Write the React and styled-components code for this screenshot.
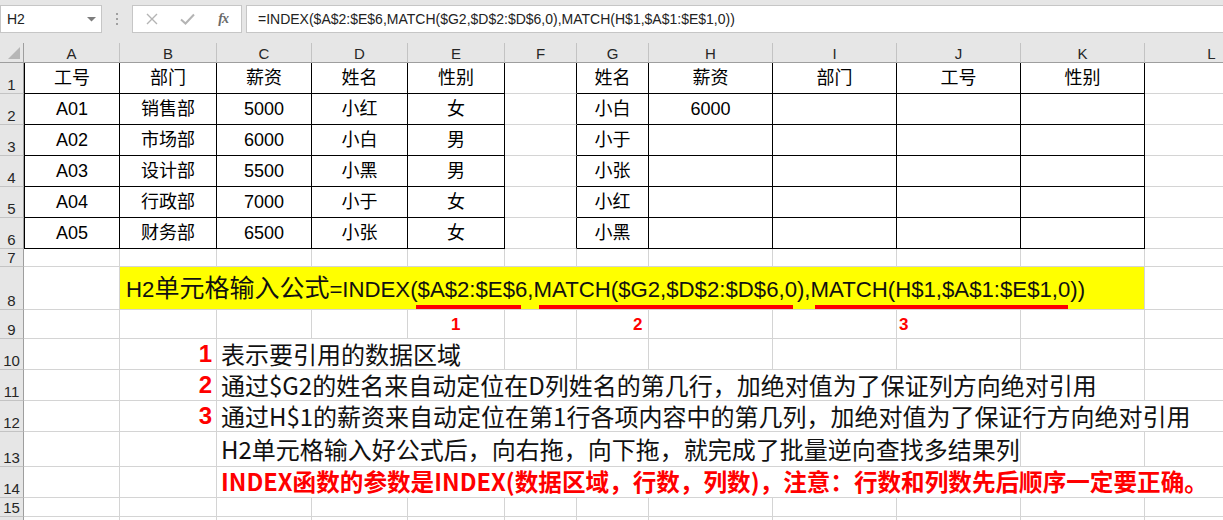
import React from 'react';
import styled, { createGlobalStyle } from 'styled-components';

const GRID = '#d4d4d4';
const HEAD_BG = '#e6e6e6';
const HEAD_SEP = '#c3c3c3';
const HEAD_EDGE = '#9e9e9e';
const BLACK = '#000';
const RED = '#ff0000';

const Global = createGlobalStyle`
  html, body { margin: 0; padding: 0; background: #fff; }
  body { font-family: "Liberation Sans", "Noto Sans CJK SC", sans-serif; overflow: hidden; }
`;

const COLS = [
  { k: 'A', w: 96 }, { k: 'B', w: 97 }, { k: 'C', w: 95 }, { k: 'D', w: 96 },
  { k: 'E', w: 97 }, { k: 'F', w: 72 }, { k: 'G', w: 72 }, { k: 'H', w: 124 },
  { k: 'I', w: 124 }, { k: 'J', w: 124 }, { k: 'K', w: 124 }, { k: 'L', w: 134 },
];

const widthOf = (start, span) =>
  COLS.slice(start, start + span).reduce((a, c) => a + c.w, 0);

/* ---------- layout ---------- */
const Sheet = styled.div`
  position: relative;
  width: 1223px;
  height: 520px;
  overflow: hidden;
  background: #fff;
`;

const FormulaBar = styled.div`
  display: flex;
  align-items: flex-start;
  box-sizing: border-box;
  height: 43px;
  padding-top: 5px;
  background: ${HEAD_BG};
`;

const NameBox = styled.div`
  box-sizing: border-box;
  width: 102px;
  height: 28px;
  background: #fff;
  border: 1px solid #c6c6c6;
  display: flex;
  align-items: center;
  justify-content: space-between;
  padding: 0 5px 0 6px;
  font: 14px "Liberation Sans", sans-serif;
  color: #222;
`;

const Grip = styled.div`
  width: 30px;
  height: 28px;
  display: flex;
  align-items: center;
  justify-content: center;
`;

const FxBox = styled.div`
  box-sizing: border-box;
  width: 110px;
  height: 28px;
  background: #fff;
  border: 1px solid #c6c6c6;
  display: flex;
  align-items: center;
  padding-left: 1px;
`;

const FxSlot = styled.div`
  width: 36px;
  height: 26px;
  display: flex;
  align-items: center;
  justify-content: center;
`;

const FxLabel = styled.span`
  font: italic bold 14px "Liberation Serif", serif;
  color: #6a6a6a;
  letter-spacing: -1px;
`;

const FormulaInput = styled.div`
  flex: 1;
  box-sizing: border-box;
  margin-left: 4px;
  height: 28px;
  background: #fff;
  border: 1px solid #c6c6c6;
  border-right: none;
  display: flex;
  align-items: center;
  padding-left: 11px;
  font: 14px "Liberation Sans", sans-serif;
  color: #222;
  white-space: nowrap;
`;

const Row = styled.div`
  display: flex;
  width: max-content;
  height: ${p => p.$h}px;
`;

const Corner = styled.div`
  box-sizing: border-box;
  flex: none;
  width: 24px;
  height: 100%;
  background: ${HEAD_BG};
  border-right: 1px solid ${HEAD_EDGE};
  border-bottom: 1px solid ${HEAD_EDGE};
  display: flex;
  align-items: flex-end;
  justify-content: flex-end;
  padding: 0 3px 3px 0;
`;

const ColHead = styled.div`
  box-sizing: border-box;
  flex: none;
  width: ${p => p.$w}px;
  height: 100%;
  background: ${HEAD_BG};
  border-right: 1px solid ${HEAD_SEP};
  border-bottom: 1px solid ${HEAD_EDGE};
  display: flex;
  align-items: center;
  justify-content: center;
  font: 15px "Liberation Sans", sans-serif;
  color: #262626;
  padding-top: 1px;
`;

const RowHead = styled.div`
  box-sizing: border-box;
  flex: none;
  width: 24px;
  height: 100%;
  background: ${HEAD_BG};
  border-right: 1px solid ${HEAD_EDGE};
  border-bottom: 1px solid ${HEAD_SEP};
  display: flex;
  align-items: flex-end;
  justify-content: center;
  padding-bottom: 1px;
  font: 15px "Liberation Sans", sans-serif;
  line-height: 1;
  color: #262626;
`;

const Cell = styled.div`
  box-sizing: border-box;
  flex: none;
  width: ${p => p.$w}px;
  height: 100%;
  background: ${p => p.$bg || '#fff'};
  border-right: 1px solid ${p => p.$right || GRID};
  border-bottom: 1px solid ${p => p.$bottom || GRID};
  border-left: ${p => (p.$left ? `1px solid ${p.$left}` : 'none')};
  display: flex;
  align-items: ${p => p.$valign || 'center'};
  justify-content: ${p => p.$justify || 'center'};
  padding: ${p => p.$pad || '0'};
  white-space: nowrap;
`;

const TableText = styled.span`
  font: 18px "Liberation Sans", "Noto Sans CJK SC", sans-serif;
  line-height: 1;
  color: #000;
`;

const FormulaNote = styled.span`
  font: 22.2px "Liberation Sans", "Noto Sans CJK SC", sans-serif;
  line-height: 1;
  color: #111;
`;

const Han = styled.span`
  font-family: "Noto Sans CJK SC", sans-serif;
  font-size: 25px;
`;

const NoteNum = styled.span`
  font: bold 24px "Liberation Sans", sans-serif;
  line-height: 1;
  color: ${RED};
`;

const NoteText = styled.span`
  font: ${p => (p.$bold ? 'bold ' : '')}${p => p.$size || 24}px "Noto Sans CJK SC", sans-serif;
  line-height: 1;
  color: ${p => (p.$red ? RED : '#111')};
`;

const RedBar = styled.div`
  position: absolute;
  top: 305px;
  height: 4px;
  background: ${RED};
`;

const RedLabel = styled.div`
  position: absolute;
  top: 316px;
  font: bold 17px "Liberation Sans", sans-serif;
  line-height: 1;
  color: ${RED};
`;

/* ---------- data ---------- */
const LEFT = [
  ['工号', '部门', '薪资', '姓名', '性别'],
  ['A01', '销售部', '5000', '小红', '女'],
  ['A02', '市场部', '6000', '小白', '男'],
  ['A03', '设计部', '5500', '小黑', '男'],
  ['A04', '行政部', '7000', '小于', '女'],
  ['A05', '财务部', '6500', '小张', '女'],
];
const RIGHT = [
  ['姓名', '薪资', '部门', '工号', '性别'],
  ['小白', '6000', '', '', ''],
  ['小于', '', '', '', ''],
  ['小张', '', '', '', ''],
  ['小红', '', '', '', ''],
  ['小黑', '', '', '', ''],
];

const FORMULA = '=INDEX($A$2:$E$6,MATCH($G2,$D$2:$D$6,0),MATCH(H$1,$A$1:$E$1,0))';

const HAN_RUN = /([\u3000-\u303f\u4e00-\u9fff\uff00-\uffef]+)/;
const Mixed = ({ text }) =>
  text.split(HAN_RUN).map((part, i) =>
    HAN_RUN.test(part) ? <Han key={i}>{part}</Han> : <React.Fragment key={i}>{part}</React.Fragment>
  );

const plain = (span = 1) => ({ span });

function tableRow(i) {
  return [
    ...LEFT[i].map((t, j) => ({ span: 1, table: true, first: j === 0, node: t && <TableText>{t}</TableText> })),
    { span: 1, gapRight: true },
    ...RIGHT[i].map(t => ({ span: 1, table: true, node: t && <TableText>{t}</TableText> })),
    plain(),
  ];
}

const num = n => ({ span: 1, justify: 'flex-end', pad: '0 4px 0 0', node: <NoteNum>{n}</NoteNum> });
const note = (span, text, opts = {}) => ({
  span,
  justify: 'flex-start',
  pad: '0 0 0 4px',
  node: <NoteText {...opts}>{text}</NoteText>,
});

const fill = n => Array.from({ length: n }, () => plain());

const ROWS = [
  ...[0, 1, 2, 3, 4, 5].map(i => ({ n: i + 1, h: 31, cells: tableRow(i) })),
  { n: 7, h: 18, cells: fill(12) },
  {
    n: 8,
    h: 43,
    cells: [
      plain(),
      {
        span: 10,
        bg: '#ffff00',
        justify: 'flex-start',
        valign: 'flex-end',
        pad: '0 0 8px 6px',
        node: (
          <FormulaNote>
            <Mixed text={'H2单元格输入公式' + FORMULA} />
          </FormulaNote>
        ),
      },
      plain(),
    ],
  },
  { n: 9, h: 29, cells: fill(12) },
  { n: 10, h: 31, cells: [plain(), num('1'), note(3, '表示要引用的数据区域'), ...fill(7)] },
  {
    n: 11,
    h: 31,
    cells: [plain(), num('2'), note(9, '通过$G2的姓名来自动定位在D列姓名的第几行，加绝对值为了保证列方向绝对引用'), plain()],
  },
  {
    n: 12,
    h: 31,
    cells: [plain(), num('3'), note(10, '通过H$1的薪资来自动定位在第1行各项内容中的第几列，加绝对值为了保证行方向绝对引用')],
  },
  {
    n: 13,
    h: 35,
    cells: [plain(), plain(), note(8, 'H2单元格输入好公式后，向右拖，向下拖，就完成了批量逆向查找多结果列'), plain(), plain()],
  },
  {
    n: 14,
    h: 31,
    cells: [
      plain(),
      plain(),
      note(10, 'INDEX函数的参数是INDEX(数据区域，行数，列数)，注意：行数和列数先后顺序一定要正确。', {
        $red: true,
        $bold: true,
        $size: 23.6,
      }),
    ],
  },
  { n: 15, h: 19, cells: fill(12) },
  { n: '', h: 19, cells: fill(12) },
];

/* ---------- icons ---------- */
const DropArrow = () => (
  <svg width="9" height="5" viewBox="0 0 9 5">
    <polygon points="0,0 9,0 4.5,4.5" fill="#7d7d7d" />
  </svg>
);

const GripDots = () => (
  <svg width="4" height="14" viewBox="0 0 4 14">
    <rect x="1" y="1" width="2" height="2" fill="#a0a0a0" />
    <rect x="1" y="6" width="2" height="2" fill="#a0a0a0" />
    <rect x="1" y="11" width="2" height="2" fill="#a0a0a0" />
  </svg>
);

const CrossIcon = () => (
  <svg width="12" height="12" viewBox="0 0 12 12">
    <path d="M1 1 L11 11 M11 1 L1 11" stroke="#b4b4b4" strokeWidth="1.4" fill="none" />
  </svg>
);

const CheckIcon = () => (
  <svg width="15" height="12" viewBox="0 0 15 12">
    <path d="M1 6.5 L5.5 10.5 L14 1.5" stroke="#b4b4b4" strokeWidth="2" fill="none" />
  </svg>
);

const CornerTriangle = () => (
  <svg width="12" height="12" viewBox="0 0 12 12">
    <polygon points="12,0 12,12 0,12" fill="#b6b6b6" />
  </svg>
);

/* ---------- component ---------- */
function SheetRow({ row }) {
  let col = 0;
  return (
    <Row $h={row.h}>
      <RowHead>{row.n}</RowHead>
      {row.cells.map((c, i) => {
        const w = widthOf(col, c.span);
        col += c.span;
        return (
          <Cell
            key={i}
            $w={w}
            $bg={c.bg}
            $right={c.table || c.gapRight ? BLACK : undefined}
            $bottom={c.table ? BLACK : undefined}
            $left={c.first ? BLACK : undefined}
            $justify={c.justify}
            $valign={c.valign}
            $pad={c.pad}
          >
            {c.node}
          </Cell>
        );
      })}
    </Row>
  );
}

const BARS = [
  { left: 416, width: 105 },
  { left: 539, width: 254 },
  { left: 815, width: 253 },
];
const LABELS = [
  { left: 451, t: '1' },
  { left: 633, t: '2' },
  { left: 899, t: '3' },
];

export default function App() {
  return (
    <>
      <Global />
      <Sheet>
        <FormulaBar>
          <NameBox>
            <span>H2</span>
            <DropArrow />
          </NameBox>
          <Grip>
            <GripDots />
          </Grip>
          <FxBox>
            <FxSlot>
              <CrossIcon />
            </FxSlot>
            <FxSlot>
              <CheckIcon />
            </FxSlot>
            <FxSlot>
              <FxLabel>fx</FxLabel>
            </FxSlot>
          </FxBox>
          <FormulaInput>{FORMULA}</FormulaInput>
        </FormulaBar>
        <Row $h={20}>
          <Corner>
            <CornerTriangle />
          </Corner>
          {COLS.map(c => (
            <ColHead key={c.k} $w={c.w}>
              {c.k}
            </ColHead>
          ))}
        </Row>
        {ROWS.map((r, i) => (
          <SheetRow key={i} row={r} />
        ))}
        {BARS.map((b, i) => (
          <RedBar key={i} style={{ left: b.left, width: b.width }} />
        ))}
        {LABELS.map((l, i) => (
          <RedLabel key={i} style={{ left: l.left }}>
            {l.t}
          </RedLabel>
        ))}
      </Sheet>
    </>
  );
}
